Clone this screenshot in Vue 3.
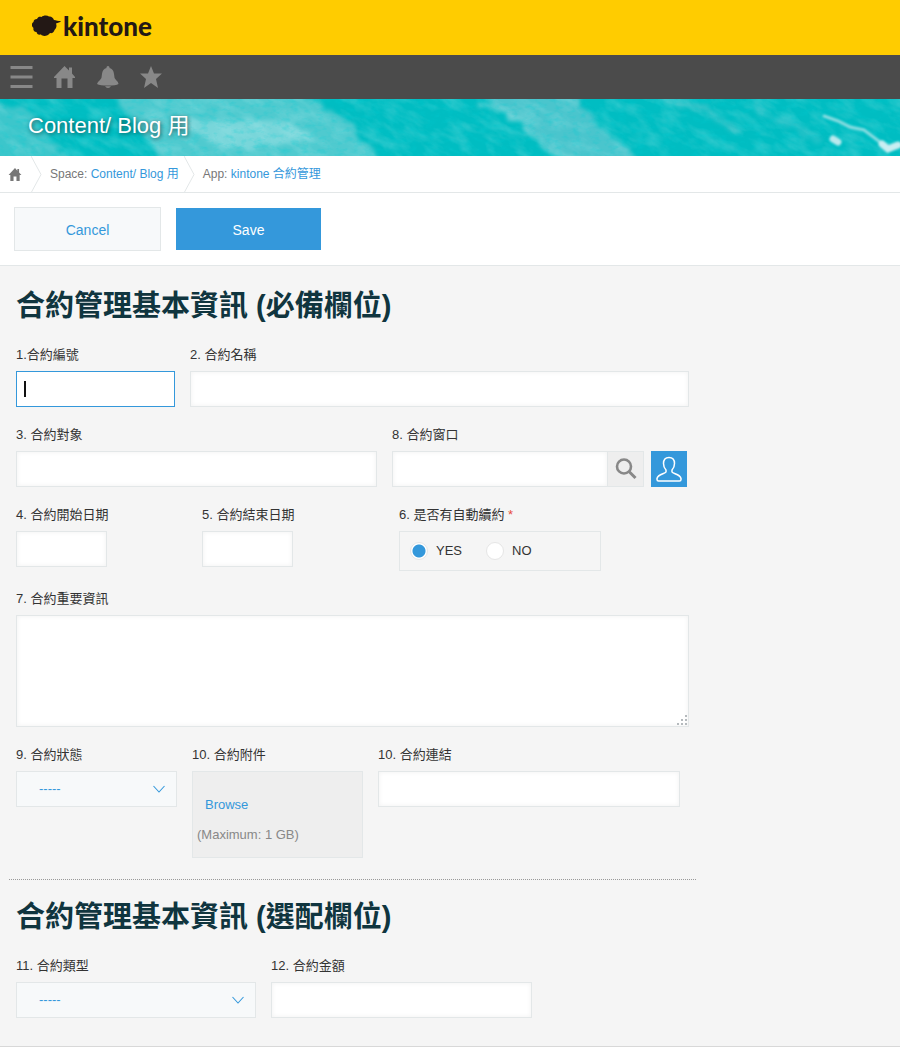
<script setup>
import { ref } from 'vue'

const autoRenew = ref('YES')
const status = ref('')
const contractType = ref('')
</script>

<template>
  <div class="page">
    <header class="brand-bar">
      <a href="#" class="brand">
        <svg class="brand-mark" viewBox="0 0 29 22" width="29" height="22" aria-hidden="true">
          <path d="M5 4C6 1.500 8 1.500 9.500 2C11 0.500 15 0 17 1.500C19 1 21 2.500 22 5C24 5.500 26 6 29 6C28 7.500 26 7.500 24 8.500C25 11 24.500 13 22.500 15C22 17.500 20 18.500 18 18C16 21 11 22 9 19.500C6 20 5 19 4.500 17C1.500 17 1 14.500 1.500 13C-1 11 -0.500 8 1.500 7C1.500 5 3 4 5 4Z" fill="#231815" />
        </svg>
        <span>kintone</span>
      </a>
    </header>

    <nav class="tool-bar" aria-label="Main">
      <button type="button" class="tool" aria-label="Menu">
        <svg viewBox="0 0 24 24" width="24" height="24"><path d="M0.500 2.500H22.500M0.500 12H22.500M0.500 21.500H22.500" stroke="#888" stroke-width="3" /></svg>
      </button>
      <button type="button" class="tool" aria-label="Home">
        <svg viewBox="0 0 24 24" width="24" height="24"><path d="M11.500 1L16 5.500V2.500H19V8.500L22 12V13H19.500V23H14.500V13.500H8.500V23H3.500V13H1V12Z" fill="#888" /></svg>
      </button>
      <button type="button" class="tool" aria-label="Notifications">
        <svg viewBox="0 0 24 24" width="24" height="24"><path d="M10.500 2Q12 0 13.500 2V3Q17.500 4 18 9Q18 13 20 15Q22.500 17 22.500 19Q20 20.500 12 20.500Q4 20.500 1 19Q1.500 17 4 15Q6 13 6 9Q6.500 4 10.500 3ZM9 21.300H15Q14 23 12 23Q10 23 9 21.300Z" fill="#888" /></svg>
      </button>
      <button type="button" class="tool" aria-label="Favorites">
        <svg viewBox="0 0 24 24" width="24" height="24"><path d="M12 1L15 8.500H23L17 14L19 23L12 18L5 23L7 14L1 8.500H9Z" fill="#888" /></svg>
      </button>
    </nav>

    <div class="cover">
      <svg class="cover-art" viewBox="0 0 900 57" preserveAspectRatio="none" aria-hidden="true">
        <defs>
          <filter id="grain" x="0" y="0" width="100%" height="100%">
            <feTurbulence type="fractalNoise" baseFrequency="0.04 0.09" numOctaves="4" seed="8" />
            <feColorMatrix values="0 0 0 0 0.56  0 0 0 0 0.88  0 0 0 0 0.89  2.200 0 0 0 -0.900" />
          </filter>
          <filter id="shade" x="0" y="0" width="100%" height="100%">
            <feTurbulence type="fractalNoise" baseFrequency="0.11 0.200" numOctaves="3" seed="4" />
            <feColorMatrix values="0 0 0 0 0  0 0 0 0 0.600  0 0 0 0 0.640  1.800 0 0 0 -0.850" />
          </filter>
          <filter id="soft" filterUnits="userSpaceOnUse" x="-20" y="-20" width="940" height="97" color-interpolation-filters="sRGB">
            <feTurbulence type="fractalNoise" baseFrequency="0.07 0.09" numOctaves="3" seed="3" result="n" />
            <feDisplacementMap in="SourceGraphic" in2="n" scale="14" xChannelSelector="R" yChannelSelector="G" />
            <feGaussianBlur stdDeviation="2" />
          </filter>
          <filter id="foam" filterUnits="userSpaceOnUse" x="800" y="0" width="110" height="67">
            <feGaussianBlur stdDeviation="1.200" />
          </filter>
        </defs>
        <rect width="900" height="57" fill="#00bdc2" />
        <g filter="url(#soft)">
          <path d="M-15 5L25 8L75 65H-15Z" fill="#3cc6cb" />
          <path d="M110 -10H290L345 20L385 67H165L140 30Z" fill="#4fcacf" />
          <path d="M170 20L290 22L320 42L220 48Z" fill="#78d6da" />
          <path d="M475 -10H575L590 20L650 67H575L520 25Z" fill="#4ac5cd" />
          <path d="M480 4Q510 12 530 34T580 62" stroke="#6fd2d7" stroke-width="4" fill="none" />
          <path d="M655 -5L705 12L740 34" stroke="#30c3c8" stroke-width="6" fill="none" />
          <path d="M750 5L820 42" stroke="#20c1c7" stroke-width="7" fill="none" />
        </g>
        <g transform="rotate(28 450 28)"><rect x="-80" y="-260" width="1060" height="580" filter="url(#grain)" opacity="0.220" /></g>
        <rect width="900" height="57" filter="url(#shade)" opacity="0.400" />
        <g filter="url(#foam)" fill="none" stroke="#8cdde1" stroke-linecap="round">
          <path d="M824 17L838 22L850 28L864 31L876 40L885 47" stroke-width="3" />
          <path d="M882 45L888 50L898 46" stroke="#c9eef2" stroke-width="7" />
          <path d="M833 40L838 43" stroke="#b9e9ed" stroke-width="7" />
        </g>
      </svg>
      <h1 class="cover-title">Content/ Blog 用</h1>
    </div>

    <nav class="crumbs" aria-label="Breadcrumb">
      <a href="#" class="crumb-home" aria-label="Home">
        <svg viewBox="0 0 24 24" width="14" height="15"><path d="M12 1L16 5.500V2.500H19V8.500L23 13H20V23H14.500V15.500H9.500V23H4V13H1Z" fill="#777" /></svg>
      </a>
      <svg class="crumb-arrow" viewBox="0 0 11 37" width="11" height="37" aria-hidden="true"><path d="M0 0L10 18.500L0 37" fill="none" stroke="#e3e7e8" /></svg>
      <span class="crumb crumb-space">Space: <a href="#">Content/ Blog 用</a></span>
      <svg class="crumb-arrow" viewBox="0 0 11 37" width="11" height="37" aria-hidden="true"><path d="M0 0L10 18.500L0 37" fill="none" stroke="#e3e7e8" /></svg>
      <span class="crumb">App: <a href="#">kintone 合約管理</a></span>
    </nav>

    <form class="record" @submit.prevent>
      <div class="actions">
        <button type="button" class="btn btn-cancel">Cancel</button>
        <button type="submit" class="btn btn-save">Save</button>
      </div>

      <div class="fields">
        <section class="section">
          <h2>合約管理基本資訊 (必備欄位)</h2>

          <div class="row row-name">
            <div class="field">
              <label for="number">1.合約編號</label>
              <div class="anchor">
                <input id="number" type="text" class="box active" />
                <span class="caret" aria-hidden="true"></span>
              </div>
            </div>
            <div class="field">
              <label for="name">2. 合約名稱</label>
              <input id="name" type="text" class="box" />
            </div>
          </div>

          <div class="row row-party">
            <div class="field">
              <label for="party">3. 合約對象</label>
              <input id="party" type="text" class="box" />
            </div>
            <div class="field">
              <label for="contact">8. 合約窗口</label>
              <div class="lookup">
                <input id="contact" type="text" class="box" />
                <button type="button" class="search" aria-label="Search">
                  <svg viewBox="0 0 24 24" width="24" height="24"><circle cx="10" cy="9.500" r="7" fill="none" stroke="#888" stroke-width="2.600" /><path d="M15 14.500L21.500 21" stroke="#888" stroke-width="3" /></svg>
                </button>
                <button type="button" class="person" aria-label="Select user">
                  <svg viewBox="0 0 28 28" width="28" height="28"><path d="M14 2.500C10.500 2.500 8.500 5 8.500 8.500C8.500 11.500 9.500 13.500 11 15V17C10 19 3 19 2 23.500V24.500Q2 26 3.500 26H24.500Q26 26 26 24.500V23.500C25 19 18 19 17 17V15C18.500 13.500 19.500 11.500 19.500 8.500C19.500 5 17.500 2.500 14 2.500Z" fill="none" stroke="#fff" stroke-width="1.500" /></svg>
                </button>
              </div>
            </div>
          </div>

          <div class="row row-dates">
            <div class="field">
              <label for="start">4. 合約開始日期</label>
              <input id="start" type="text" class="box date" />
            </div>
            <div class="field">
              <label for="end">5. 合約結束日期</label>
              <input id="end" type="text" class="box date" />
            </div>
            <fieldset class="field">
              <legend>6. 是否有自動續約 <span class="required">*</span></legend>
              <div class="radios">
                <label class="radio" for="renew-yes"><input id="renew-yes" v-model="autoRenew" type="radio" name="renew" value="YES" />YES</label>
                <label class="radio" for="renew-no"><input id="renew-no" v-model="autoRenew" type="radio" name="renew" value="NO" />NO</label>
              </div>
            </fieldset>
          </div>

          <div class="row">
            <div class="field">
              <label for="notes">7. 合約重要資訊</label>
              <div class="anchor">
                <textarea id="notes" class="box notes"></textarea>
                <svg class="grip" viewBox="0 0 10 10" width="10" height="10" aria-hidden="true"><path d="M8 0h2v2h-2zM4 4h2v2h-2zM8 4h2v2h-2zM0 8h2v2h-2zM4 8h2v2h-2zM8 8h2v2h-2z" fill="#b5babd" /></svg>
              </div>
            </div>
          </div>

          <div class="row row-status">
            <div class="field">
              <label for="status">9. 合約狀態</label>
              <div class="anchor">
                <select id="status" v-model="status" class="choice"><option value="">-----</option></select>
                <svg class="chevron" viewBox="0 0 14 8" width="14" height="8" aria-hidden="true"><path d="M1.500 1L7 7L12.500 1" fill="none" stroke="#3498db" stroke-width="1.100" /></svg>
              </div>
            </div>
            <div class="field">
              <label for="attachment">10. 合約附件</label>
              <div class="upload">
                <button id="attachment" type="button" class="browse">Browse</button>
                <p>(Maximum: 1 GB)</p>
              </div>
            </div>
            <div class="field">
              <label for="link">10. 合約連結</label>
              <input id="link" type="url" class="box link" />
            </div>
          </div>
        </section>

        <hr />

        <section class="section">
          <h2>合約管理基本資訊 (選配欄位)</h2>
          <div class="row row-amount">
            <div class="field">
              <label for="type">11. 合約類型</label>
              <div class="anchor">
                <select id="type" v-model="contractType" class="choice"><option value="">-----</option></select>
                <svg class="chevron" viewBox="0 0 14 8" width="14" height="8" aria-hidden="true"><path d="M1.500 1L7 7L12.500 1" fill="none" stroke="#3498db" stroke-width="1.100" /></svg>
              </div>
            </div>
            <div class="field">
              <label for="amount">12. 合約金額</label>
              <input id="amount" type="text" class="box" />
            </div>
          </div>
        </section>
      </div>
    </form>
  </div>
</template>

<style>
body {
  background: #f5f5f5;
}
</style>

<style scoped>
.page,
.page * {
  box-sizing: border-box;
}
.page {
  font-family: "Liberation Sans", "Noto Sans CJK TC", sans-serif;
  font-size: 13px;
  line-height: 18px;
  color: #333;
}
button,
input,
select,
textarea {
  font: inherit;
  margin: 0;
}
button {
  cursor: pointer;
}
a {
  color: #3498db;
  text-decoration: none;
}
.brand-bar {
  display: flex;
  align-items: center;
  height: 55px;
  padding: 0 32px 3px;
  background: #ffcc00;
}
.brand {
  display: flex;
  align-items: center;
  gap: 2px;
  font-family: Lato, sans-serif;
  font-size: 26px;
  font-weight: 900;
  line-height: 30px;
  color: #231815;
}
.tool-bar {
  display: flex;
  align-items: center;
  gap: 19px;
  height: 44px;
  padding-left: 10px;
  background: #4b4b4b;
}
.tool {
  display: flex;
  padding: 0;
  border: 0;
  background: none;
}
.cover {
  position: relative;
  display: flex;
  align-items: center;
  height: 57px;
  padding: 0 28px 4px;
  overflow: hidden;
}
.cover-art {
  position: absolute;
  inset: 0;
  width: 100%;
  height: 100%;
}
.cover-title {
  position: relative;
  margin: 0;
  font-size: 22px;
  font-weight: 400;
  line-height: 32px;
  color: #fff;
  text-shadow: 1px 1px 4px rgba(0, 0, 0, 0.6);
}
.crumbs {
  display: flex;
  align-items: center;
  height: 37px;
  font-size: 12px;
  line-height: 20px;
  color: #777;
  background: #fff;
  border-bottom: 1px solid #e3e7e8;
}
.crumb-home {
  display: flex;
  padding: 0 9px 0 8px;
}
.crumb-arrow {
  flex: none;
}
.crumb {
  padding-left: 8px;
}
.crumb-space {
  padding-right: 5px;
}
.actions {
  display: flex;
  align-items: center;
  gap: 15px;
  height: 73px;
  padding: 0 14px;
  background: #fff;
  border-bottom: 1px solid #e3e7e8;
}
.btn {
  padding: 2px 0 0;
  font-size: 14px;
}
.btn-cancel {
  width: 147px;
  height: 44px;
  color: #3498db;
  background: #f7f9fa;
  border: 1px solid #e3e7e8;
}
.btn-save {
  width: 145px;
  height: 42px;
  color: #fff;
  background: #3498db;
  border: 0;
}
.fields {
  padding: 20px 16px 28px;
  background: #f5f5f5;
  border-bottom: 1px solid #d8d8d8;
}
.section {
  max-width: 673px;
}
h2 {
  margin: 0 0 19px;
  font-size: 29px;
  font-weight: 700;
  line-height: 40px;
  color: #10353f;
}
.row {
  display: grid;
  gap: 15px;
  align-items: start;
}
.row + .row {
  margin-top: 18px;
}
.row-name {
  grid-template-columns: minmax(0, 159fr) minmax(0, 499fr);
}
.row-party {
  grid-template-columns: minmax(0, 361fr) minmax(0, 297fr);
}
.row-dates {
  grid-template-columns: minmax(0, 171fr) minmax(0, 182fr) minmax(0, 290fr);
}
.row-status {
  grid-template-columns: minmax(0, 161fr) minmax(0, 171fr) minmax(0, 311fr);
}
.row-amount {
  grid-template-columns: minmax(0, 240fr) minmax(0, 261fr) minmax(0, 142fr);
}
.field {
  min-width: 0;
  margin: 0;
  padding: 0;
  border: 0;
}
.field > label,
legend {
  display: block;
  height: 20px;
  margin-bottom: 6px;
  padding: 0;
  line-height: 20px;
  white-space: nowrap;
}
.required {
  color: #e74c3c;
}
.anchor {
  position: relative;
}
.box {
  display: block;
  width: 100%;
  height: 36px;
  padding: 0 8px;
  color: #333;
  background: #fff;
  border: 1px solid #e3e7e8;
  border-radius: 0;
  box-shadow: inset 0 0 5px #f1f1f1;
  outline: none;
}
.box.active {
  border-color: #3498db;
  box-shadow: none;
}
.caret {
  position: absolute;
  top: 10px;
  left: 8px;
  width: 2px;
  height: 16px;
  background: #111;
}
.date {
  width: 91px;
}
.link {
  max-width: 302px;
}
.notes {
  height: 112px;
  padding: 8px;
  resize: none;
}
.grip {
  position: absolute;
  right: 2px;
  bottom: 2px;
}
.lookup {
  display: flex;
}
.lookup .box {
  flex: 1;
  min-width: 0;
}
.search,
.person {
  display: flex;
  flex: none;
  align-items: center;
  justify-content: center;
  width: 36px;
  height: 36px;
  padding: 0;
}
.search {
  background: #eee;
  border: 1px solid #e3e7e8;
  border-left: 0;
}
.person {
  margin: 0 2px 0 7px;
  background: #3498db;
  border: 0;
}
.radios {
  display: flex;
  align-items: center;
  gap: 24px;
  max-width: 202px;
  height: 40px;
  padding: 0 10px;
  border: 1px solid #e3e7e8;
}
.radio {
  display: flex;
  align-items: center;
  gap: 8px;
  line-height: 20px;
}
.radio input {
  width: 18px;
  height: 18px;
  background: #fff;
  border: 1px solid #e6e6e6;
  border-radius: 50%;
  appearance: none;
}
.radio input:checked {
  background: radial-gradient(circle, #3498db 6px, #fff 7px);
}
.choice {
  display: block;
  width: 100%;
  height: 36px;
  padding: 0 36px 0 22px;
  color: #3498db;
  background: #f7f9fa;
  border: 1px solid #e3e7e8;
  border-radius: 0;
  appearance: none;
}
.chevron {
  position: absolute;
  top: 14px;
  right: 11px;
  pointer-events: none;
}
.upload {
  height: 87px;
  padding: 24px 4px 0;
  color: #888;
  background: #eee;
  border: 1px solid #e3e7e8;
}
.upload p {
  margin: 12px 0 0;
}
.browse {
  display: block;
  padding: 0 8px;
  color: #3498db;
  background: none;
  border: 0;
}
.row + .row,
.section .row + .row {
  margin-top: 18px;
}
hr {
  max-width: 687px;
  margin: 21px -7px 17px;
  border: 0;
  border-top: 1px dotted #999;
}
</style>
